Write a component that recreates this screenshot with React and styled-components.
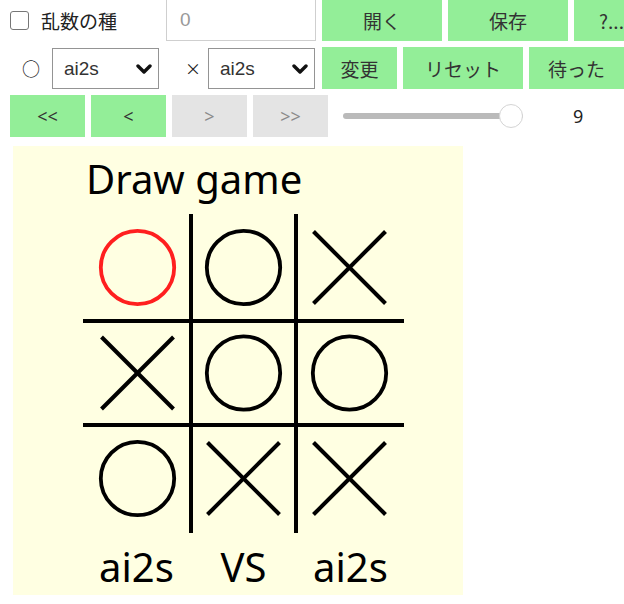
import React from 'react'
import styled, {createGlobalStyle} from 'styled-components'

const board = [
	['o', 'o', 'x'],
	['x', 'o', 'o'],
	['o', 'x', 'x'],
]
const lastMove = [0, 0]

const GlobalStyle = createGlobalStyle`
	html, body {
		margin: 0;
		padding: 0;
		overflow: hidden;
		background: #fff;
	}
	body {
		font-family: "Noto Sans CJK JP", "Noto Sans", sans-serif;
		color: #333;
	}
`

const Page = styled.div`
	margin-top: -1px;
	padding-left: 10px;
	display: flex;
	flex-direction: column;
	gap: 6px;
	width: 900px;
`
const Row = styled.div`
	display: flex;
	align-items: center;
	height: 42px;
	gap: ${p => p.gap || 0}px;
`
const Check = styled.input.attrs({type: 'checkbox'})`
	appearance: none;
	-webkit-appearance: none;
	width: 19px;
	height: 19px;
	margin: 0;
	box-sizing: border-box;
	border: 1.5px solid #767676;
	border-radius: 3px;
	background: #fff;
`
const Label = styled.span`
	width: 137px;
	padding-left: 12px;
	box-sizing: border-box;
	font-size: 19px;
	color: #222;
`
const SeedInput = styled.input`
	width: 150px;
	height: 42px;
	box-sizing: border-box;
	border: 1px solid #cfcfcf;
	padding: 0 13px;
	margin: 0 6px 0 0;
	font: 19px "Liberation Sans", sans-serif;
	&::placeholder { color: #999; }
`
const Button = styled.button`
	width: ${p => p.w || 75}px;
	height: 42px;
	flex: none;
	border: none;
	padding: 0;
	background: ${p => (p.disabled ? '#e4e4e4' : '#93ee98')};
	color: ${p => (p.disabled ? '#8a8a8a' : '#333')};
	font: 19px "Noto Sans CJK JP", "Noto Sans", sans-serif;
`
const Arrow = styled(Button)`
	font-family: "Noto Sans", sans-serif;
	font-size: 18px;
`
const Mark = styled.span`
	width: ${p => p.w}px;
	padding-left: ${p => p.pad || 0}px;
	box-sizing: border-box;
	text-align: ${p => (p.pad ? 'left' : 'center')};
	font-size: ${p => p.size}px;
	color: #222;
`
const SelectWrap = styled.div`
	position: relative;
	width: 107px;
	height: 41px;
	margin-right: ${p => p.mr || 0}px;
`
const Select = styled.select`
	appearance: none;
	-webkit-appearance: none;
	width: 100%;
	height: 100%;
	box-sizing: border-box;
	border: 1px solid #949494;
	border-radius: 0;
	background: #fff;
	padding-left: 11px;
	font: 19px "Liberation Sans", sans-serif;
	color: #333;
`
const Chevron = styled.svg`
	position: absolute;
	right: 7px;
	top: 16px;
	pointer-events: none;
`
const Range = styled.input.attrs({type: 'range'})`
	-webkit-appearance: none;
	appearance: none;
	width: 180px;
	height: 26px;
	margin: 0 0 0 9px;
	background: transparent;
	&::-webkit-slider-runnable-track {
		height: 6px;
		background: #bababa;
		border-radius: 3px;
	}
	&::-webkit-slider-thumb {
		-webkit-appearance: none;
		width: 24px;
		height: 24px;
		box-sizing: border-box;
		border-radius: 50%;
		background: #fff;
		border: 1px solid #d4d4d4;
		margin-top: -9px;
	}
`
const Value = styled.span`
	margin-left: 44px;
	font: 18px "Noto Sans", sans-serif;
	color: #222;
`
const Panel = styled.div`
	margin: 3px 0 0 3px;
	width: 450px;
	height: 449px;
	background: #ffffe2;
	padding-left: 70px;
	box-sizing: border-box;
	font-family: "Noto Sans", sans-serif;
	color: #000;
`
const Title = styled.div`
	font-size: 40px;
	line-height: 40px;
	padding: 13px 0 0 3px;
	margin-bottom: 15px;
`
const Players = styled.div`
	display: grid;
	grid-template-columns: repeat(3, 107px);
	margin-top: 14px;
	font-size: 40px;
	line-height: 40px;
	text-align: center;
`

const cx = [54.5, 160.5, 266.5]
const cy = [53.5, 159, 264.5]

function Piece({kind, x, y, red}) {
	if (kind === 'o') {
		return <circle cx={x} cy={y} r="36.7" fill="none" stroke={red ? '#ff1f1f' : '#000'} strokeWidth="3.8" />
	}
	return (
		<g stroke="#000" strokeWidth="4">
			<line x1={x - 36} y1={y - 36} x2={x + 36} y2={y + 36} />
			<line x1={x + 36} y1={y - 36} x2={x - 36} y2={y + 36} />
		</g>
	)
}

function Board() {
	return (
		<svg width="321" height="319" viewBox="0 0 321 319" style={{display: 'block'}}>
			<g stroke="#000" strokeWidth="4">
				<line x1="108" y1="0" x2="108" y2="319" />
				<line x1="213" y1="0" x2="213" y2="319" />
				<line x1="0" y1="107" x2="321" y2="107" />
				<line x1="0" y1="211" x2="321" y2="211" />
			</g>
			{board.map((row, r) =>
				row.map((k, c) => (
					<Piece key={r + '-' + c} kind={k} x={cx[c]} y={cy[r]} red={r === lastMove[0] && c === lastMove[1]} />
				))
			)}
		</svg>
	)
}

function PlayerSelect({mr}) {
	return (
		<SelectWrap mr={mr}>
			<Select defaultValue="ai2s">
				<option>human</option>
				<option>ai2s</option>
			</Select>
			<Chevron width="16" height="10" viewBox="0 0 16 10">
				<polyline points="2,2 8,8 14,2" fill="none" stroke="#111" strokeWidth="3.4" strokeLinecap="round" strokeLinejoin="round" />
			</Chevron>
		</SelectWrap>
	)
}

export default function App() {
	return (
		<>
			<GlobalStyle />
			<Page>
				<Row gap={0}>
					<Check />
					<Label>乱数の種</Label>
					<SeedInput placeholder="0" />
					<Row gap={6}>
						<Button w={120}>開く</Button>
						<Button w={120}>保存</Button>
						<Button w={75}>?...</Button>
					</Row>
				</Row>
				<Row>
					<Mark w={42} size={18}>○</Mark>
					<PlayerSelect />
					<Mark w={49} size={16} pad={26}>×</Mark>
					<PlayerSelect mr={7} />
					<Row gap={6}>
						<Button w={75}>変更</Button>
						<Button w={120}>リセット</Button>
						<Button w={95}>待った</Button>
					</Row>
				</Row>
				<Row gap={6}>
					<Arrow>&lt;&lt;</Arrow>
					<Arrow>&lt;</Arrow>
					<Arrow disabled>&gt;</Arrow>
					<Arrow disabled>&gt;&gt;</Arrow>
					<Range min={0} max={9} defaultValue={9} />
					<Value>9</Value>
				</Row>
				<Panel>
					<Title>Draw game</Title>
					<Board />
					<Players>
						<span>ai2s</span>
						<span>VS</span>
						<span>ai2s</span>
					</Players>
				</Panel>
			</Page>
		</>
	)
}
